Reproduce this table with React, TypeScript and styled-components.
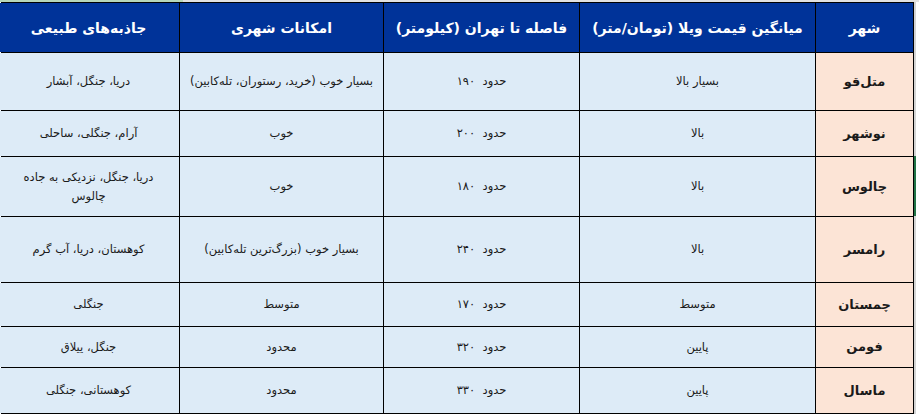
import React from "react";
import styled, { createGlobalStyle } from "styled-components";

const GlobalStyle = createGlobalStyle`
  html, body {
    margin: 0;
    padding: 0;
    background: #ffffff;
  }
  body {
    font-family: "DejaVu Sans", "Noto Sans", sans-serif;
  }
`;

interface Row {
  city: string;
  price: string;
  distance: string;
  urban: string;
  nature: string;
  height: number;
}

const rows: Row[] = [
  { city: "متل‌قو", price: "بسیار بالا", distance: "حدود  ۱۹۰", urban: "بسیار خوب (خرید، رستوران، تله‌کابین)", nature: "دریا، جنگل، آبشار", height: 57 },
  { city: "نوشهر", price: "بالا", distance: "حدود  ۲۰۰", urban: "خوب", nature: "آرام، جنگلی، ساحلی", height: 45 },
  { city: "چالوس", price: "بالا", distance: "حدود  ۱۸۰", urban: "خوب", nature: "دریا، جنگل، نزدیکی به جاده چالوس", height: 59 },
  { city: "رامسر", price: "بالا", distance: "حدود  ۲۴۰", urban: "بسیار خوب (بزرگ‌ترین تله‌کابین)", nature: "کوهستان، دریا، آب گرم", height: 65 },
  { city: "چمستان", price: "متوسط", distance: "حدود  ۱۷۰", urban: "متوسط", nature: "جنگلی", height: 43 },
  { city: "فومن", price: "پایین", distance: "حدود  ۳۲۰", urban: "محدود", nature: "جنگل، ییلاق", height: 40 },
  { city: "ماسال", price: "پایین", distance: "حدود  ۳۳۰", urban: "محدود", nature: "کوهستانی، جنگلی", height: 45 },
];

const headers = ["شهر", "میانگین قیمت ویلا (تومان/متر)", "فاصله تا تهران (کیلومتر)", "امکانات شهری", "جاذبه‌های طبیعی"];

// index of the row (counting the header as 0) that carries Excel's green selection edge
const SELECTED_ROW = 3;

const Sheet = styled.div`
  width: 919px;
  height: 417px;
  overflow: hidden;
  background: #ffffff;
`;

const TopStrip = styled.div`
  display: flex;
  height: 2px;
  background: #e1e1e1;
`;

const TopSelected = styled.div`
  width: 183px;
  background: #b7d7b9;
`;

const TableRow = styled.div`
  display: flex;
  padding-left: 1px;
`;

const Grid = styled.div<{ $rows: string }>`
  direction: rtl;
  display: grid;
  grid-template-columns: 97px 235px 195px 203px 181px;
  grid-template-rows: ${(p) => p.$rows};
  gap: 1px;
  padding: 1px;
  background: #000000;
  width: 911px;
`;

const SelectionEdge = styled.div`
  display: flex;
  flex-direction: column;
  width: 2px;
  background: #d4d4d4;
`;

const EdgePiece = styled.div<{ $h: number; $on?: boolean }>`
  height: ${(p) => p.$h}px;
  background: ${(p) => (p.$on ? "#217346" : "transparent")};
`;

const HeadCell = styled.div`
  background: #003399;
  color: #ffffff;
  font-weight: bold;
  font-size: 14px;
  display: flex;
  align-items: center;
  justify-content: center;
  text-align: center;
  white-space: nowrap;
`;

const Cell = styled.div<{ $city?: boolean; $pad?: number }>`
  background: ${(p) => (p.$city ? "#fce4d6" : "#ddebf7")};
  color: #1a1a1a;
  font-size: ${(p) => (p.$city ? "13px" : "11.5px")};
  font-weight: ${(p) => (p.$city ? "bold" : "normal")};
  display: flex;
  align-items: center;
  justify-content: center;
  text-align: center;
  padding: 0 ${(p) => p.$pad ?? 4}px;
  line-height: 1.65;
  white-space: pre-wrap;
`;

const Below = styled.div`
  height: 4px;
  background: #ffffff;
`;

export default function App() {
  const rowTemplate = ["49px", ...rows.map((r) => `${r.height}px`)].join(" ");
  const edgeHeights = [50, ...rows.map((r) => r.height + 1)];
  return (
    <Sheet>
      <GlobalStyle />
      <TopStrip>
        <TopSelected />
      </TopStrip>
      <TableRow>
        <Grid $rows={rowTemplate}>
          {headers.map((h) => (
            <HeadCell key={h}>{h}</HeadCell>
          ))}
          {rows.map((r) => (
            <React.Fragment key={r.city}>
              <Cell $city>{r.city}</Cell>
              <Cell>{r.price}</Cell>
              <Cell>{r.distance}</Cell>
              <Cell>{r.urban}</Cell>
              <Cell $pad={18}>{r.nature}</Cell>
            </React.Fragment>
          ))}
        </Grid>
        <SelectionEdge>
          {edgeHeights.map((h, i) => (
            <EdgePiece key={i} $h={h} $on={i === SELECTED_ROW} />
          ))}
        </SelectionEdge>
      </TableRow>
      <Below />
    </Sheet>
  );
}
